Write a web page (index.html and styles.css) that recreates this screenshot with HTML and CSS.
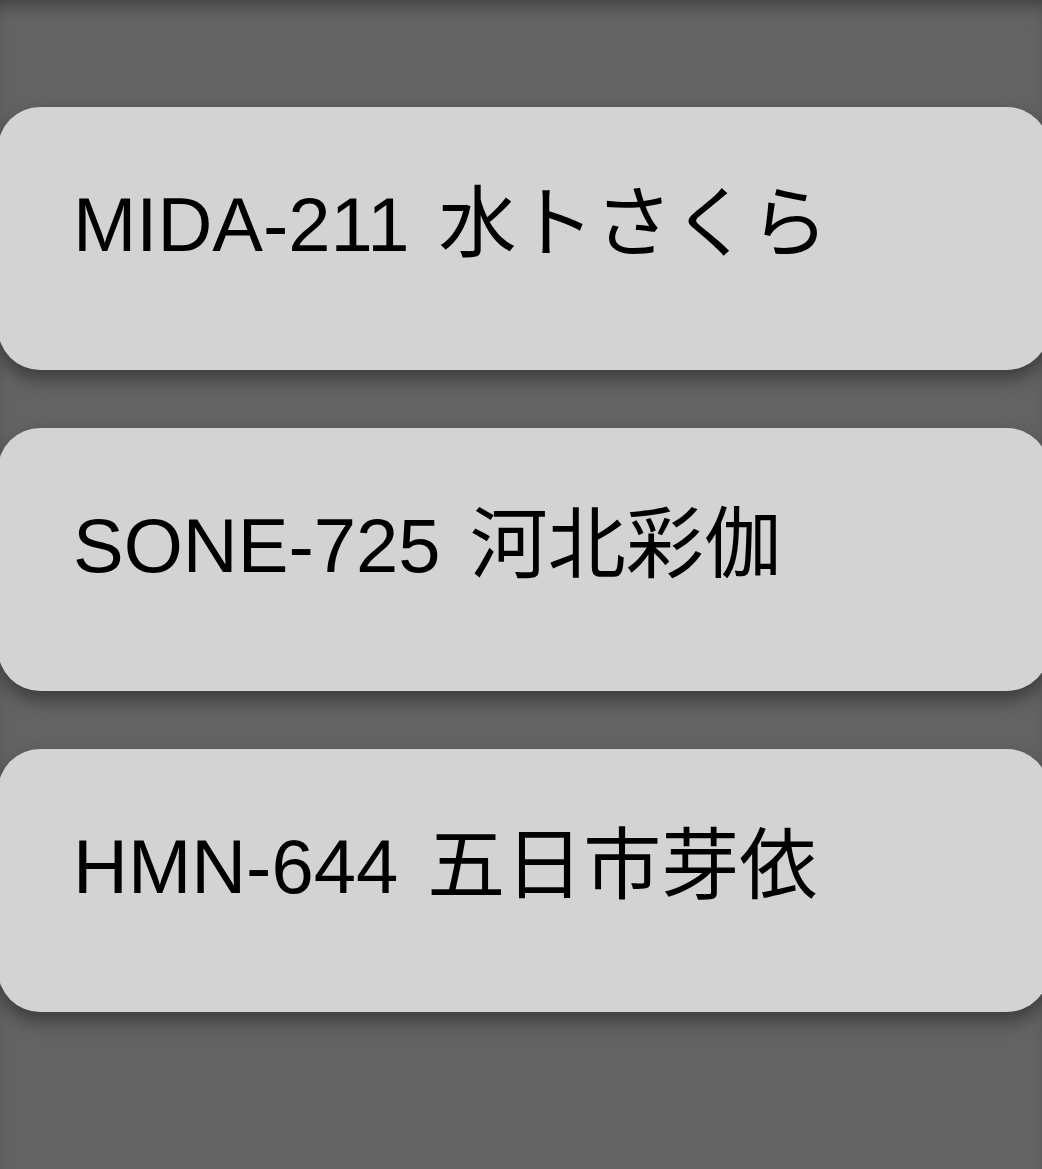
FILE: index.html
```html
<!DOCTYPE html>
<html lang="ja">
<head>
    <meta charset="UTF-8">
    <meta name="viewport" content="width=device-width, initial-scale=1.0">
    <title>List</title>
    <link rel="stylesheet" href="styles.css">
</head>
<body>

    <div class="page">
        <ul class="code-list">
            <li class="code-card"><span class="code">MIDA-211</span> <span class="name">水トさくら</span></li>
            <li class="code-card"><span class="code">SONE-725</span> <span class="name">河北彩伽</span></li>
            <li class="code-card"><span class="code">HMN-644</span> <span class="name">五日市芽依</span></li>
        </ul>
    </div>

</body>
</html>
```

FILE: styles.css
```css
html, body {
    margin: 0;
    padding: 0;
    background: #636363;
    font-family: 'Liberation Sans', 'Noto Sans CJK JP', sans-serif;
    color: #000;
}

.page {
    min-height: 1169px;
    overflow: hidden;
    box-shadow: inset 0 14px 18px -10px rgba(0, 0, 0, 0.4);
}

.code-list {
    list-style: none;
    margin: 0;
    padding: 107px 0 0;
    display: flex;
    flex-direction: column;
    gap: 58px;
}

.code-card {
    box-sizing: border-box;
    width: 1051px;
    height: 263px;
    margin-left: -2px;
    padding: 72px 75px 0;
    background: #d3d3d3;
    border-radius: 42px;
    box-shadow: 0 9px 18px rgba(0, 0, 0, 0.4);
    font-size: 76px;
    line-height: 91px;
    white-space: nowrap;
}

.name {
    margin-left: 8px;
    font-family: 'Noto Sans CJK JP', sans-serif;
    font-size: 78px;
    line-height: 0.9;
}
```
